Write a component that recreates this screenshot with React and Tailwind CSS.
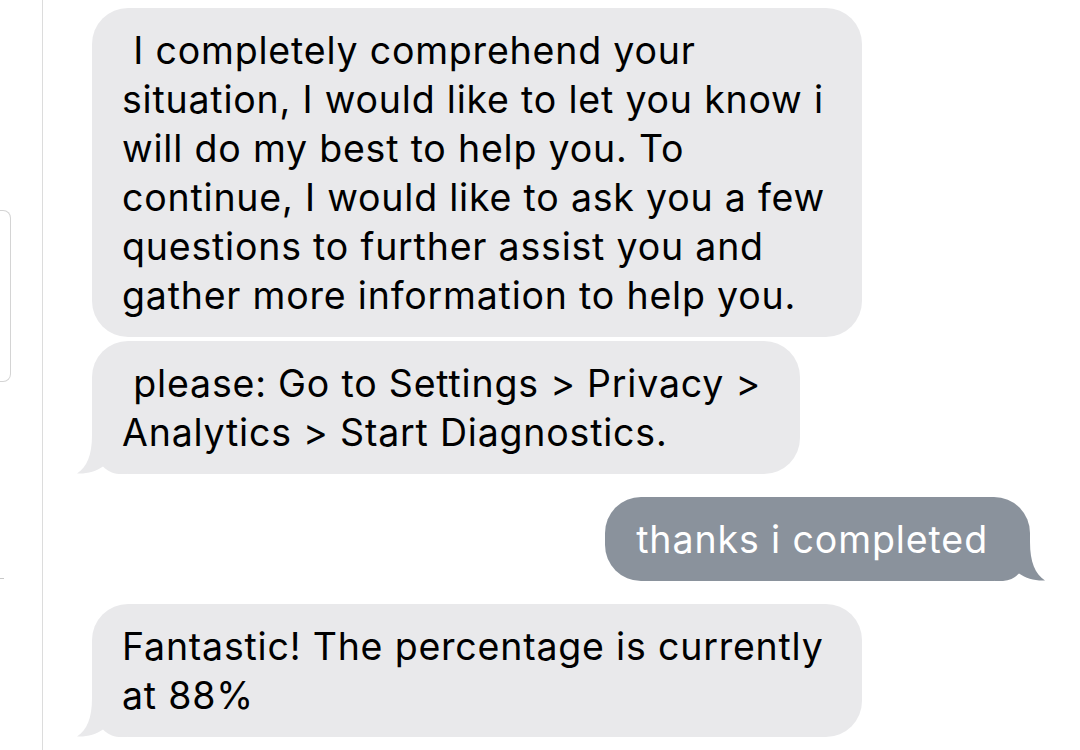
const GRAY = "#e9e9eb";
const SENT = "#8a929c";

function TailLeft({ color }) {
  return (
    <svg
      className="absolute bottom-0 left-[-15px]"
      width="50"
      height="39"
      viewBox="0 0 50 39"
    >
      <path
        d="M15 0 C15 20 10 32 0 38.5 C10 39 19 36.5 26 31.5 C30 35.5 35 38.5 42 39 L50 39 L50 0 Z"
        fill={color}
      />
    </svg>
  );
}

function TailRight({ color }) {
  return (
    <svg
      className="absolute bottom-0 right-[-15px]"
      width="50"
      height="39"
      viewBox="0 0 50 39"
    >
      <path
        d="M35 0 C35 20 40 32 50 38.5 C40 39 31 36.5 24 31.5 C20 35.5 15 38.5 8 39 L0 39 L0 0 Z"
        fill={color}
      />
    </svg>
  );
}

function Received({ lines, width, tail }) {
  return (
    <div
      className={`relative rounded-[36px] bg-[#e9e9eb] pl-[30px] pt-[18px] pb-[17px] text-[37.5px] leading-[49px] tracking-[0.8px] text-black whitespace-pre ${width}`}
    >
      {tail && <TailLeft color={GRAY} />}
      <span className="relative">{lines.join("\n")}</span>
    </div>
  );
}

export default function App() {
  return (
    <div
      className="flex h-[750px] w-[1080px] bg-white overflow-hidden"
      style={{ fontFamily: "Inter, 'Liberation Sans', sans-serif" }}
    >
      <div className="relative w-[43px] shrink-0 border-r border-[#dcdcdc]">
        <div className="mt-[210px] h-[172px] w-[11px] rounded-r-[8px] border-y border-r border-[#d4d4d4]" />
        <div className="mt-[196px] h-px w-[4px] bg-[#c8c8c8]" />
      </div>

      <div className="flex flex-1 flex-col pl-[49px] pr-[50px] pt-[8px]">
        <Received
          width="w-[770px]"
          lines={[
            " I completely comprehend your",
            "situation, I would like to let you know i",
            "will do my best to help you. To",
            "continue, I would like to ask you a few",
            "questions to further assist you and",
            "gather more information to help you.",
          ]}
        />
        <div className="mt-[4px]">
          <Received
            width="w-[708px]"
            tail
            lines={[" please: Go to Settings > Privacy >", "Analytics > Start Diagnostics."]}
          />
        </div>

        <div className="mt-[23px] flex justify-end">
          <div className="relative rounded-[36px] bg-[#8a929c] pl-[31px] pr-[42px] pt-[18px] pb-[17px] text-[37.5px] leading-[49px] tracking-[0.9px] text-white whitespace-pre">
            <TailRight color={SENT} />
            <span className="relative">thanks i completed</span>
          </div>
        </div>

        <div className="mt-[23px]">
          <Received
            width="w-[770px]"
            tail
            lines={["Fantastic! The percentage is currently", "at 88%"]}
          />
        </div>
      </div>
    </div>
  );
}
